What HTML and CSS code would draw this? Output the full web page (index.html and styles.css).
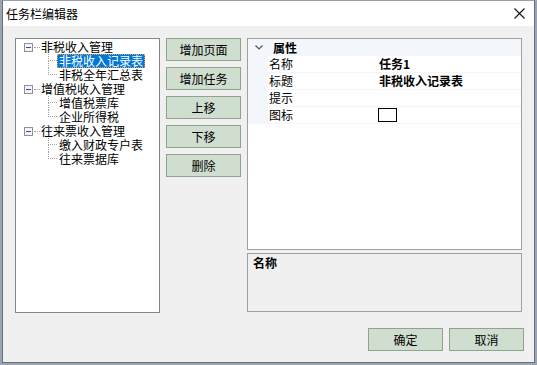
FILE: index.html
```html
<!DOCTYPE html>
<html lang="zh">
<head>
<meta charset="utf-8">
<title>任务栏编辑器</title>
<link rel="stylesheet" href="styles.css">
</head>
<body>
<div class="window">
  <div class="titlebar">
    <span class="title">任务栏编辑器</span>
    <svg class="close" width="11" height="11" viewBox="0 0 11 11"><path d="M0.5 0.5 L10.5 10.5 M10.5 0.5 L0.5 10.5" stroke="#111" stroke-width="1.1" fill="none"/></svg>
  </div>
  <div class="main">
    <div class="tree">
      <div class="node root"><span class="exp"><svg width="9" height="9" viewBox="0 0 9 9"><rect x="0.5" y="0.5" width="8" height="8" fill="#f4f4f4" stroke="#919191"/><path d="M2 4.5 H7" stroke="#2b55a0" stroke-width="1"/></svg></span><span class="hdots"></span><span class="label">非税收入管理</span></div>
      <div class="node child"><span class="guide"><span class="gtop"></span><span class="gbot"></span></span><span class="label selected">非税收入记录表</span></div>
      <div class="node child last"><span class="guide"><span class="gtop"></span><span class="gbot"></span></span><span class="label">非税全年汇总表</span></div>
      <div class="node root"><span class="exp"><svg width="9" height="9" viewBox="0 0 9 9"><rect x="0.5" y="0.5" width="8" height="8" fill="#f4f4f4" stroke="#919191"/><path d="M2 4.5 H7" stroke="#2b55a0" stroke-width="1"/></svg></span><span class="hdots"></span><span class="label">增值税收入管理</span></div>
      <div class="node child"><span class="guide"><span class="gtop"></span><span class="gbot"></span></span><span class="label">增值税票库</span></div>
      <div class="node child last"><span class="guide"><span class="gtop"></span><span class="gbot"></span></span><span class="label">企业所得税</span></div>
      <div class="node root"><span class="exp"><svg width="9" height="9" viewBox="0 0 9 9"><rect x="0.5" y="0.5" width="8" height="8" fill="#f4f4f4" stroke="#919191"/><path d="M2 4.5 H7" stroke="#2b55a0" stroke-width="1"/></svg></span><span class="hdots"></span><span class="label">往来票收入管理</span></div>
      <div class="node child"><span class="guide"><span class="gtop"></span><span class="gbot"></span></span><span class="label">缴入财政专户表</span></div>
      <div class="node child last"><span class="guide"><span class="gtop"></span><span class="gbot"></span></span><span class="label">往来票据库</span></div>
    </div>
    <div class="buttons">
      <button class="btn">增加页面</button>
      <button class="btn">增加任务</button>
      <button class="btn">上移</button>
      <button class="btn">下移</button>
      <button class="btn">删除</button>
    </div>
    <div class="right">
      <div class="grid">
        <div class="cat">
          <span class="chev"><svg width="8" height="5" viewBox="0 0 8 5"><path d="M0.5 0.5 L4 4 L7.5 0.5" stroke="#555" stroke-width="1.2" fill="none"/></svg></span>
          <span class="catname">属性</span>
        </div>
        <div class="prow"><span class="margin"></span><span class="pname">名称</span><span class="pval">任务1</span></div>
        <div class="prow"><span class="margin"></span><span class="pname">标题</span><span class="pval">非税收入记录表</span></div>
        <div class="prow"><span class="margin"></span><span class="pname">提示</span><span class="pval"></span></div>
        <div class="prow"><span class="margin"></span><span class="pname">图标</span><span class="pval"><span class="iconbox"></span></span></div>
      </div>
      <div class="desc"><span class="descname">名称</span></div>
    </div>
  </div>
  <div class="footer">
    <button class="btn">确定</button>
    <button class="btn">取消</button>
  </div>
</div>
</body>
</html>
```
FILE: styles.css
```css
* { box-sizing: border-box; }
html, body { margin: 0; padding: 0; }
body {
  width: 537px;
  height: 365px;
  background: #9aa4b2;
  font-family: "Noto Sans CJK SC", "Noto Sans", sans-serif;
  font-size: 12px;
  color: #000;
  overflow: hidden;
}
.window {
  margin-left: 2px;
  width: 533px;
  height: 363px;
  border: 1px solid #6a6e76;
  border-top-color: #9aa0a8;
  background: #f0f0f0;
  display: flex;
  flex-direction: column;
}
.titlebar {
  height: 25px;
  background: #fff;
  display: flex;
  align-items: center;
  justify-content: space-between;
  padding-left: 3px;
  padding-right: 9px;
}
.title { line-height: 14px; }
.close { display: block; }
.main {
  margin-top: 12px;
  padding-left: 12px;
  display: grid;
  grid-template-columns: 145px 75px 275px;
  column-gap: 6px;
  height: 275px;
}
.tree {
  background: #fff;
  border: 1px solid #828790;
  padding-top: 1px;
}
.node {
  height: 14px;
  display: flex;
  align-items: center;
  line-height: 14px;
  white-space: nowrap;
}
.root { padding-left: 8px; }
.exp { width: 9px; height: 9px; display: block; }
.exp svg { display: block; }
.hdots {
  width: 6px;
  margin-left: 1px;
  border-top: 1px dotted #a0a0a0;
  height: 0;
}
.root .label { padding: 0 1px; }
.child { padding-left: 32px; }
.guide {
  width: 9px;
  height: 14px;
  display: flex;
  flex-direction: column;
}
.gtop {
  height: 7px;
  border-left: 1px dotted #a0a0a0;
  border-bottom: 1px dotted #a0a0a0;
}
.gbot {
  height: 7px;
  border-left: 1px dotted #a0a0a0;
}
.last .gbot { border-left-color: transparent; }
.child .label {
  height: 14px;
  padding: 0 1px;
  border: 1px solid transparent;
  line-height: 12px;
}
.child .label.selected {
  background: #0078d7;
  color: #fff;
  border: 1px dotted #e8a040;
}
.buttons {
  display: flex;
  flex-direction: column;
  gap: 6px;
}
.btn {
  height: 23px;
  width: 75px;
  background: #cfdecf;
  border: 1px solid #8da58d;
  font-family: "Noto Sans CJK SC", "Noto Sans", sans-serif;
  font-size: 12px;
  color: #000;
  padding: 0;
  line-height: 20px;
  border-radius: 0;
}
.buttons .btn { flex: 0 0 23px; }
.right {
  display: flex;
  flex-direction: column;
  gap: 3px;
  height: 274px;
}
.grid {
  height: 213px;
  border: 1px solid #a0a0a0;
  background: #fff;
}
.cat {
  height: 17px;
  background: #f3f6fb;
  display: flex;
  align-items: center;
  line-height: 14px;
}
.chev { width: 25px; padding-left: 7px; display: flex; align-items: center; }
.chev svg { display: block; }
.catname { font-weight: bold; }
.prow {
  height: 17px;
  display: flex;
  line-height: 16px;
}
.margin { width: 20px; background: #f3f6fb; }
.pname {
  width: 108px;
  padding-left: 1px;
  border-bottom: 1px solid #f5f5f5;
}
.pval {
  flex: 1;
  padding-left: 3px;
  font-weight: bold;
  border-bottom: 1px solid #f5f5f5;
  display: flex;
  align-items: center;
}
.iconbox {
  width: 19px;
  height: 14px;
  border: 1px solid #000;
  background: #fff;
  margin-left: -1px;
}
.desc {
  height: 59px;
  border: 1px solid #a0a0a0;
  background: #f0f0f0;
  padding: 2px 5px;
  line-height: 14px;
}
.descname { font-weight: bold; }
.footer {
  margin-top: 15px;
  display: flex;
  justify-content: flex-end;
  gap: 6px;
  padding-right: 10px;
}
```
